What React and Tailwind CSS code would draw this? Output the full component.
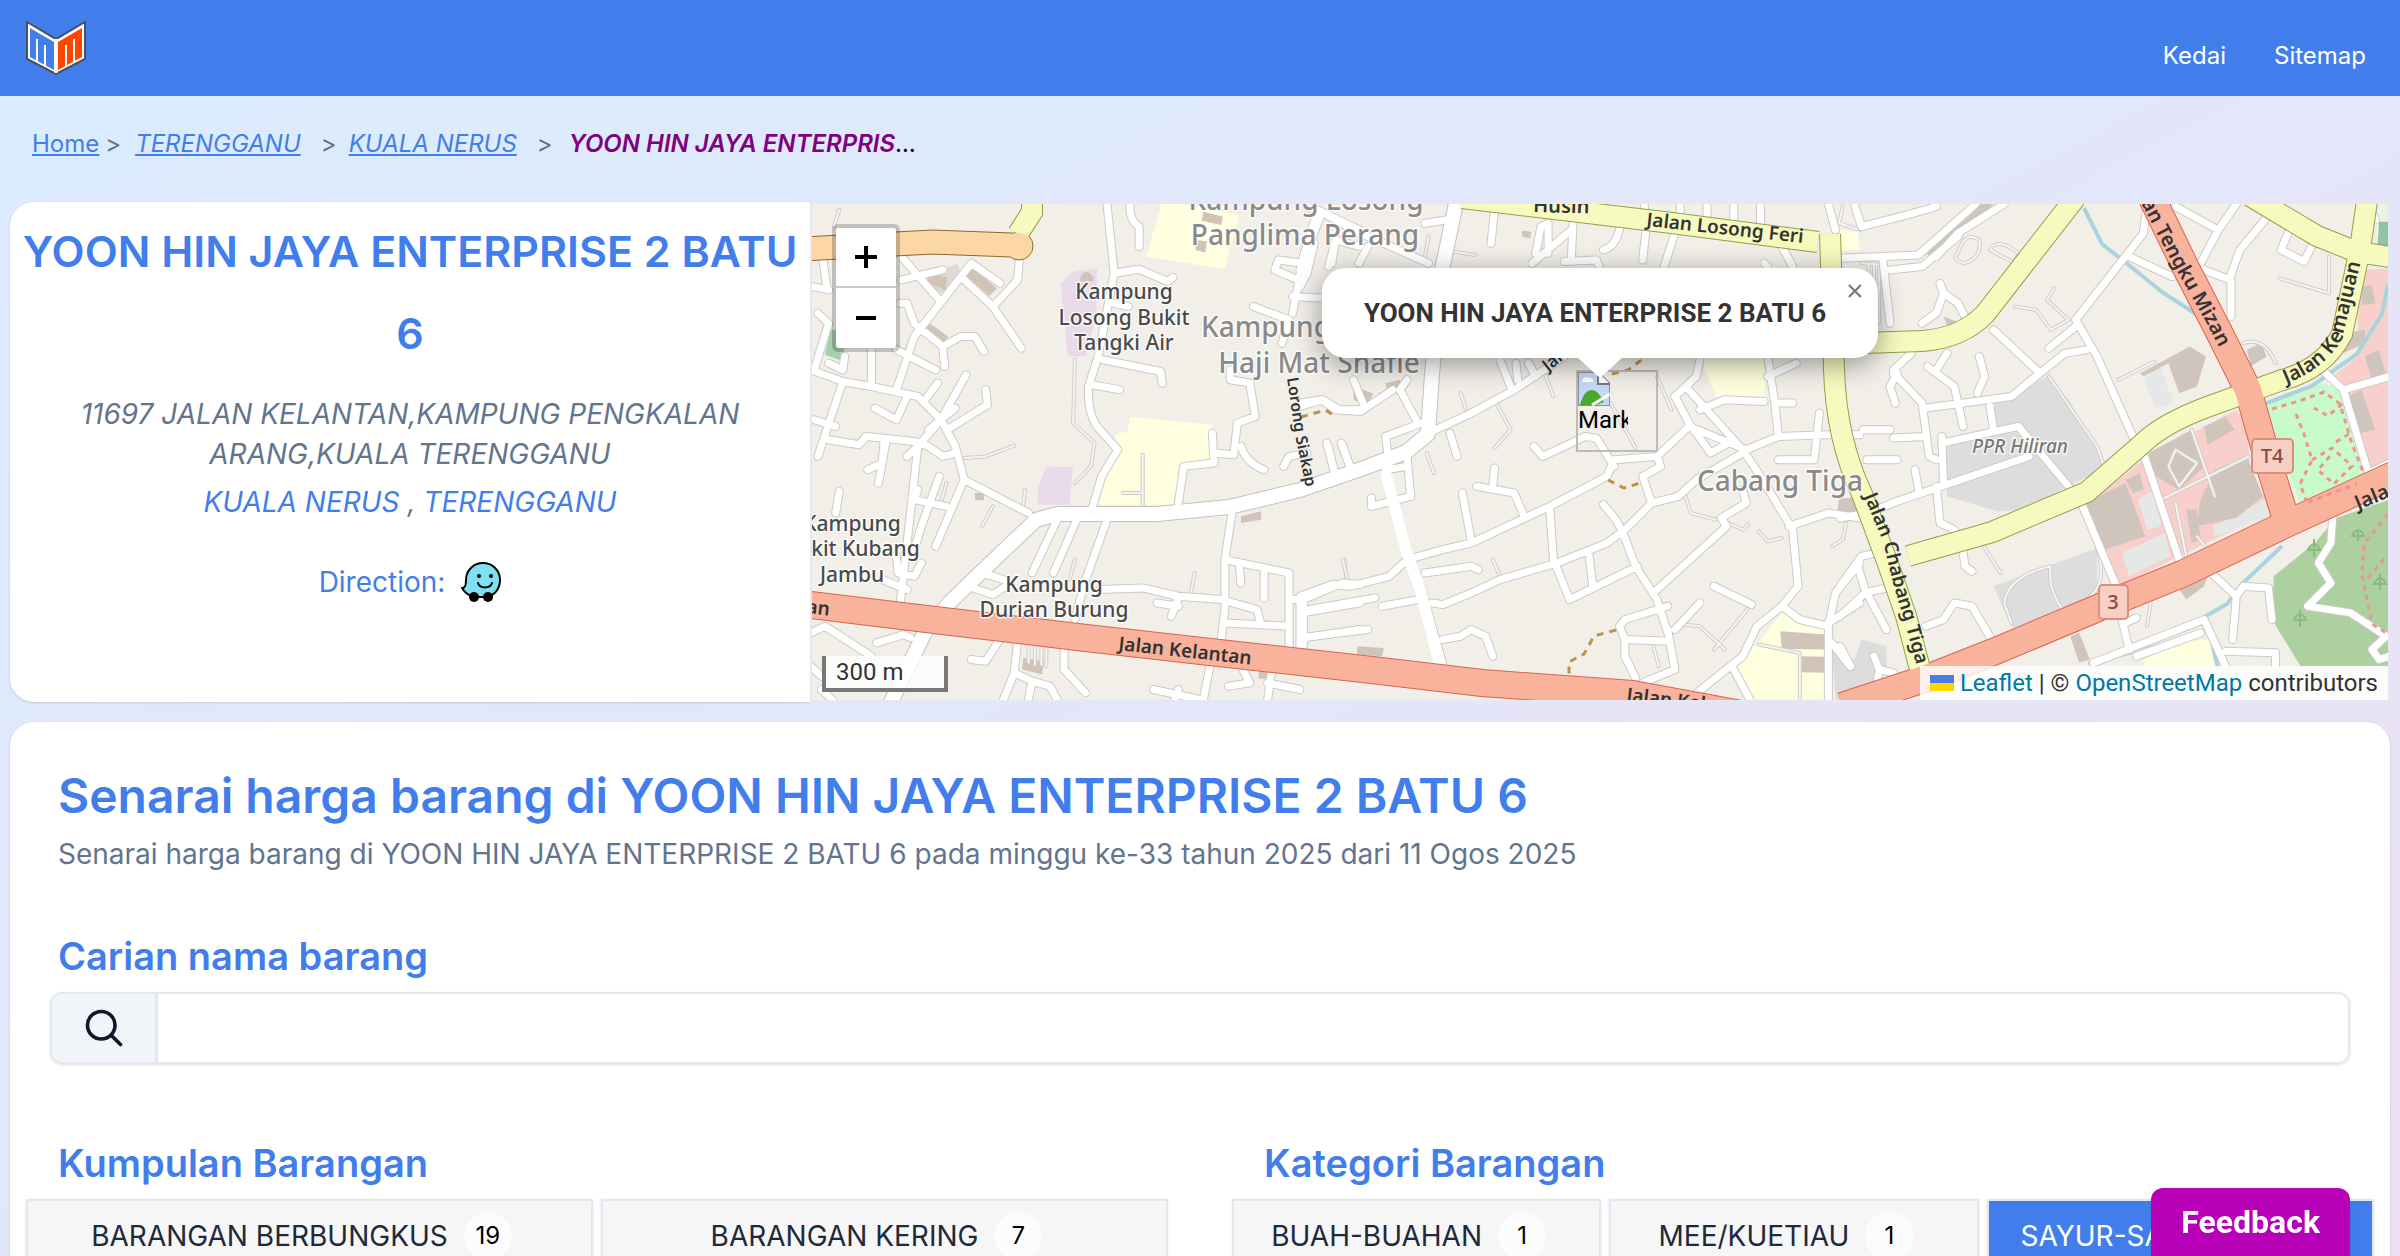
import React from 'react';

// Each tile holds its own drawing units, the transform places it on the map
const tiles = [
  {
    id: 'west',
    transform: 'translate(-12 -14) scale(0.357 0.333)',
    areas: [
      { fill: '#feffdf', d: 'M1015 30L1230 75L1190 238L970 200ZM925 682L1155 705L1150 820L1065 830L1055 945L835 945L850 860L900 790L880 735L918 725Z' },
      { fill: '#e9dae9', d: 'M730 280L765 245L832 235L830 380L800 500L750 500ZM665 945L668 890L690 830L765 832L755 945Z' },
      { fill: '#a5cfae', d: 'M85 420L140 420L115 512L70 495Z' },
      { fill: '#dcdad6', d: 'M355 255L440 222L448 240L400 310L360 300Z' },
      { fill: '#d0c3b8', d: 'M360 250L412 262L408 300L360 280ZM480 232L552 295L530 318L466 258ZM360 398L415 440L402 458L346 415ZM625 1405L683 1415L678 1455L622 1440ZM1130 65L1185 80L1180 105L1125 92ZM785 262Q800 230 822 262L820 275L785 275ZM1235 980L1292 965V990L1235 1000ZM490 910H515V932H490ZM1285 1440H1308V1468H1285ZM1110 150L1140 155L1135 188L1108 180Z' },
    ],
    trackways: 'M770 510L765 700L825 760L815 830L770 880M460 805L520 800L600 768M540 950L510 1010M630 900L625 950M110 60L95 110M1105 1150L1095 1210M770 1110L755 1170M960 795V950M905 910H960M640 1360V1420M658 1360V1425M676 1360V1425M690 1360V1430M1525 1110L1530 1165M410 880L395 940',
    roads: 'M860 42L880 250L835 500L808 590Q805 680 840 720L890 780L845 860L820 950M880 250L950 238L1030 275L1045 262M925 42Q920 90 950 110L950 170M850 510L1010 545L1015 580M820 585L895 600M880 340L920 350M284 200L390 330M284 270L400 240M270 600L320 440L480 220L560 280M460 270L540 350L620 475M540 350L610 270L615 200M330 410L400 470L450 440L490 440L515 485M400 470L405 530M270 480L380 540M200 480L200 590M30 540L120 575L200 590L330 620L395 690L435 770L460 870L640 970M40 540L80 400L50 370M35 290L80 300M65 215L75 290M125 500L120 540M80 520L120 540M395 690L465 555M350 630L385 580M435 655L360 720M420 715L525 645L520 600M210 655L270 690L300 620M395 690L330 770L280 1250M40 690L100 710M120 575L50 800M80 750L165 765L185 740L320 755L360 770L400 800L435 790M240 760L220 880M190 840L230 820L235 760M300 800L330 770M460 870L380 1070M390 860L340 1010L320 1080M320 930L410 950M330 900L320 930M110 905L100 970M270 1100L275 1150L320 1160L340 1120M230 1170L300 1200M280 340H300L320 400M720 990L650 1150M775 990L710 1150M860 990L800 1170L770 1290M510 1150L570 1170M470 1190L540 1215L590 1180M840 1200L960 1195L1060 1220L1180 1230L1280 1260L1290 1300M1060 1225L1040 1280M1000 1240L1060 1250M1210 970L1190 1110L1190 1260L1180 1350M1190 1110L1370 1150L1370 1370M1230 1120L1235 1180M1300 1140L1300 1225M1370 1230L1410 1230L1520 1180L1568 1185M1410 1230V1370M1410 1270L1568 1240M1410 1345L1568 1320M1190 1300L1370 1310M1060 940L1075 830L1160 820L1155 730M1160 790L1215 795L1225 700L1275 680L1260 580L1205 570V540M1235 770Q1250 820 1300 840M1355 830L1370 800L1420 790M1480 770L1495 840M1520 765L1540 830M1400 650L1465 630L1510 660H1568M1380 320L1468 325M1380 370L1410 200L1450 60L1568 120M1410 220L1340 210L1330 240L1385 265M1270 350L1370 390M1490 220L1500 150L1568 170M1370 390L1350 460M30 1330L70 1310L200 1400M215 1360L290 1335L310 1345M610 1350L600 1450L570 1530M480 1410L520 1415L560 1350M740 1370L740 1440L800 1510M600 1450L650 1475L640 1530M650 1475L700 1490L720 1530M1150 1420L1130 1530M1240 1440L1260 1480L1200 1490M1320 1450L1310 1530M1310 1480L1400 1500M990 1500L1120 1530M1060 1500L1050 1530M60 1500L90 1530M30 1430L60 1460',
  },
  {
    id: 'centre',
    transform: 'translate(488 -14) scale(0.357 0.333)',
    areas: [
      { fill: '#feffdf', d: 'M1120 500L1310 500L1300 620L1165 620ZM1350 1270L1480 1320L1470 1530H1260L1225 1430L1290 1350Z' },
      { fill: '#dddcda', d: 'M1490 1380L1568 1420V1530H1500Z' },
      { fill: '#d0c3b8', d: 'M1345 1325L1475 1335V1380L1350 1378ZM1405 1400L1468 1402V1450L1405 1448ZM1510 925L1568 925V975L1505 970ZM150 590L205 610L190 650L150 630ZM240 580L280 570L285 600L245 620ZM160 1370L235 1375L230 1400L160 1395ZM622 122L648 125L645 145L622 140Z' },
    ],
    trackways: 'M450 610L465 660M550 640L590 720L545 775M870 640L940 775M685 550L710 620M1000 560L1040 660M1080 920L1095 970L1165 990M1200 1000L1240 1020L1255 1005M1285 1025L1310 1055L1350 1045M1530 1000L1520 1050L1490 1070M120 1110L135 1180M540 1110L560 1160M1070 1305L1120 1310L1190 1380M1260 1250L1160 1380M1285 1365L1400 1390V1530M990 1370L1005 1430M355 790L375 850M430 185L490 195M360 140L350 200M1520 50L1510 100L1568 120',
    roads: 'M380 720L480 670L600 600L740 500M420 730L440 800M590 590L560 510M610 570L605 520M660 560L640 520M240 840L300 1100L340 1200L400 1425M300 800L310 920L200 950L200 925M240 840L300 830M300 1110L400 1080L480 1060L700 950L860 860L880 810L1000 800M655 770L680 800L800 740L830 745L880 830M1000 800L1090 710L1250 780L1340 740L1480 735H1568M1000 800L1010 830L960 860L985 940L910 1020L860 1060L720 1120L560 1170L480 1210L400 1245L370 1240M700 965L710 1110L755 1230L945 1130M810 1100L820 1190M850 945L885 990L905 1030L940 1130L1000 1230L1030 1330M1000 1200L1195 1010L1180 985L1250 940L1240 900M985 940L1060 920L1110 870L1240 790M1050 620L1090 700L1150 790L1200 760M1050 620L1110 560L1120 510M1080 590L1240 780L1290 860L1380 1020L1395 1190L1350 1250L1280 1310L1240 1400L1100 1520M1120 660L1190 630L1300 635M1310 500L1330 640H1380M1330 640L1340 740M1310 560L1390 520M1455 670L1440 810H1340M1370 1010L1480 970L1568 985M1350 1250L1400 1290L1480 1310L1500 1210L1568 1120M1480 1310V1530M1480 1300L1568 1240M1490 1360L1540 1430M1160 1190L1265 1245M1120 1240L1050 1320M1030 1250L910 1290L895 1310L910 1350L1030 1355M910 1350L910 1400L940 1465M1030 1320L1050 1440L960 1480M1210 1430L1260 1530M480 1055L455 910M495 890L600 910L630 985M540 890L545 835M300 1110L250 1160L140 1190L90 1185L0 1220V1380M350 1150L480 1130L500 1140M230 1250L330 1230M0 1265L210 1225M0 1345L190 1320M400 1350L450 1340L480 1320L520 1340L540 1400M330 700L280 600L300 570M0 640L60 630L100 660L170 665L260 600M150 570L180 650M340 700L240 740L250 830M75 760L95 840M115 760L140 830M400 320H440M50 60L150 120L360 220M350 100L410 90M545 60L535 160M40 160L20 250L0 290M100 150L80 230M190 170L165 220M765 90L760 210M660 190L675 110L695 100V190M760 120L650 220M740 215L830 210L840 235M900 90Q890 170 850 180M970 110L960 210M1050 130L1020 230M965 50V80M1065 50V85M1140 50V90M1215 50V100M1290 50V100M1340 150L1380 230M1480 42L1500 120M20 50L60 70L0 240M1310 230L1300 220',
  },
  {
    id: 'east',
    transform: 'translate(1028 -14) scale(0.357 0.333)',
    areas: [
      { fill: '#dddddd', d: 'M435 640L580 560L640 630L750 830L510 960L440 965L300 920L300 770L430 730ZM430 1190L720 1075V1240L530 1325L480 1310ZM60 1350L130 1370V1430L60 1520L30 1440Z' },
      { fill: '#c8facc', d: 'M1190 640L1350 580L1410 600L1480 850L1290 940L1250 830Z' },
      { fill: '#add19e', d: 'M1390 985L1540 930V1430H1290L1210 1290L1215 1160L1330 1060Z' },
      { fill: '#f9cfcb', d: 'M690 950L860 800L1110 660L1140 700L1150 870L1220 960L930 1110L780 1190ZM1450 240L1540 235V840L1490 850L1420 600L1380 560L1450 500Z' },
      { fill: '#e6e7e7', d: 'M790 1090L910 1030L925 1100L810 1160ZM835 930L880 900L900 1010L860 1020ZM1045 1010L1190 930L1210 980L1050 1040ZM850 570L895 520L935 640L885 655Z' },
      { fill: '#feffdf', d: 'M850 1410L960 1355L1040 1350L1060 1430H850ZM0 120L50 125L55 180L0 185Z' },
      { fill: '#d0c5bc', d: 'M690 940L800 880L855 1040L740 1080ZM865 790L985 720L1020 830L950 900L870 850ZM1050 840L1140 800L1185 920L1110 985L1000 1010L1010 930ZM1020 710L1080 680L1105 720L1030 765ZM840 550L980 470L1025 500L1000 590L950 610L920 520L850 560ZM290 380L340 400L330 410L300 405ZM1140 480L1180 460L1195 500L1150 530ZM950 1200L1030 1160L1020 1190L970 1230ZM645 1340L670 1330L700 1410L670 1420ZM1425 620L1460 600L1500 720L1460 730ZM1410 430L1470 420V460L1410 490ZM0 925L60 925L50 975L0 960ZM240 190L380 42H430L270 210ZM1470 500L1510 480L1530 560L1490 570ZM1465 290L1490 285L1500 340L1460 345ZM800 870L840 850L850 900L820 910ZM970 960H1000L1010 1050L985 1060Z' },
      { fill: '#8fc3a4', d: 'M1510 95H1540V180H1505Z' },
    ],
    trackways: 'M585 560L720 770L740 830M330 190Q350 120 390 150Q400 200 350 220Q310 210 330 190M420 180Q440 140 500 190L490 220ZM600 295L580 330L640 390L590 420L550 360L490 350M780 570L880 515M1130 460Q1190 440 1220 520M1230 265L1370 310V200M400 1065L450 1150M720 1075Q750 1180 700 1220M590 1130Q580 1200 630 1270M460 1240Q470 1160 590 1130M460 1240L480 1300M920 830L940 780L1000 820L950 890ZM900 930L1145 800M985 720L1050 920M940 940L970 1100M1000 1040L1030 1080M700 1420L1000 1340M860 1310L870 1240M110 230V400M80 220V300M95 220V330M60 220L120 225',
    roads: 'M270 200L330 130L460 42M0 205L220 195L380 42M140 240L230 230L330 140M120 210L140 400M40 42L60 110L170 80L270 50M280 280L290 310L270 370L230 400M290 310L330 340L360 400M430 420L560 550M585 475L660 410M690 480L630 490L560 550L480 620L240 655M860 42L850 130L660 390L720 500L820 740M850 790L950 1110M810 200L930 260L960 250M1020 240L1095 270V380M1090 270L1120 180L1190 90M940 50L1060 120L1010 220M1060 120L1110 42M1255 130L1235 180L1300 215L1330 150M150 540L200 490M160 550L140 590L155 640M150 550L230 640L250 800L270 810M245 530L320 590L345 710M270 540L300 490M390 500L405 560L385 610M420 650L430 720M285 760L500 710L640 890M290 880L285 740M150 745L240 740M65 720H140M75 810H160M210 840L220 900M0 985L80 970L160 935L530 800M270 890L280 1000L320 1020M345 1090L350 1130L370 1145M680 950L770 1180M0 1190L60 1100L140 1080M50 1130L70 1200L130 1320M0 1280L70 1210L150 1190M240 1310L290 1290L320 1240L370 1250L430 1360M0 1370L30 1430M95 1400L110 1440L100 1500M110 1440L150 1450M710 1420L1020 1290L1080 1430M790 1290L810 1380M800 1300L830 1285M830 1400L1010 1330M1040 1150L1110 1220L1130 1190L1200 1195L1210 1290M1110 1220L1100 1350M1080 1385L1220 1390V1430M1380 985L1375 1060L1340 1120L1375 1180L1310 1250L1430 1270L1530 1340L1490 1380L1510 1410L1540 1400M1350 540L1410 600L1540 560M1410 600L1480 850L1540 820M1480 42L1500 90',
  },
];

// casing, fill, width
const palette = {
  yellow: ['#93a04a', '#f7fabf', 20],
  orange: ['#8a6a2c', '#fcd6a4', 23],
  red: ['#d9644c', '#f9b29c', 26],
};

const highways = [
  { kind: 'yellow', d: 'M206 30L220 8L220 -10' },
  { kind: 'orange', d: 'M-10 45L120 38L200 41' },
  { kind: 'yellow', d: 'M650 -6L860 19L1006 38' },
  { kind: 'yellow', d: 'M1018 30L1020 90L1022 165Q1024 235 1050 290L1076 360L1094 412L1112 480' },
  { kind: 'yellow', d: 'M1022 140L1110 137Q1150 134 1173 110L1268 -12' },
  { kind: 'yellow', d: 'M1096 352L1180 328L1275 288L1330 240Q1350 220 1395 203L1470 176Q1512 165 1530 130L1548 45L1556 -10' },
  { kind: 'yellow', d: 'M1438 -8L1505 32L1545 48L1585 54' },
  { kind: 'red', d: 'M-10 400L131 417L274 434L398 448L560 466L670 479L820 490L940 512' },
  { kind: 'red', d: 'M1030 502L1115 474L1186 446L1286 404L1370 370L1470 322L1590 267' },
  { kind: 'red', d: 'M1338 -10L1375 66L1408 130L1436 186L1457 260L1476 322' },
];

const trunkRoad = 'M78 500L112 430L138 398L188 350L224 316L245 310L345 310L417 303L488 286L552 264L594 248L616 230L620 170L630 66L646 -10';

const labels = [
  { x: 494, y: 6, size: 28, soft: true, text: 'Kampung Losong' },
  { x: 493, y: 41, size: 28, soft: true, text: 'Panglima Perang' },
  { x: 454, y: 133, size: 28, soft: true, text: 'Kampung' },
  { x: 507, y: 169, size: 28, soft: true, text: 'Haji Mat Shafie' },
  { x: 968, y: 287, size: 28, soft: true, text: 'Cabang Tiga' },
  { x: 312, y: 95, size: 21, text: 'Kampung' },
  { x: 312, y: 121, size: 21, text: 'Losong Bukit' },
  { x: 312, y: 146, size: 21, text: 'Tangki Air' },
  { x: 40, y: 327, size: 21, text: 'Kampung' },
  { x: 40, y: 352, size: 21, text: 'Bukit Kubang' },
  { x: 40, y: 378, size: 21, text: 'Jambu' },
  { x: 242, y: 388, size: 21, text: 'Kampung' },
  { x: 242, y: 413, size: 21, text: 'Durian Burung' },
];

const streetNames = [
  { id: 'losong-feri', d: 'M834 22L1010 41', size: 19, text: 'Jalan Losong Feri' },
  { id: 'husin', d: 'M721 8L800 10', size: 20, text: 'Husin' },
  { id: 'kelantan', d: 'M306 446L480 465', size: 19, text: 'Jalan Kelantan' },
  { id: 'kelantan-east', d: 'M814 497L930 511', size: 19, text: 'Jalan Kelantan' },
  { id: 'kelantan-west', d: 'M-6 409L40 414', size: 19, text: 'an' },
  { id: 'siakap', d: 'M475 174L483 230L497 300', size: 16, text: 'Lorong Siakap' },
  { id: 'chabang', d: 'M1052 292L1072 340Q1080 380 1092 415L1112 490', size: 19, text: 'Jalan Chabang Tiga' },
  { id: 'mizan', d: 'M1318 -22L1360 58L1395 120L1424 176', size: 20, text: 'Jalan Tengku Mizan' },
  { id: 'kemajuan', d: 'M1474 180Q1514 164 1530 135L1552 45', size: 20, text: 'Jalan Kemajuan' },
  { id: 'jalan-east', d: 'M1546 306L1600 284', size: 20, text: 'Jalan' },
  { id: 'jalan-mid', d: 'M736 168L790 124', size: 17, text: 'Jalan' },
];

const groups = [
  { name: 'BARANGAN BERBUNGKUS', count: 19 },
  { name: 'BARANGAN KERING', count: 7 },
];

const categories = [
  { name: 'BUAH-BUAHAN', count: 1 },
  { name: 'MEE/KUETIAU', count: 1 },
  { name: 'SAYUR-SAYURAN', count: 3, active: true },
];

const Lines = ({ d, color, width }) => (
  <path
    d={d}
    fill="none"
    stroke={color}
    strokeWidth={width}
    strokeLinecap="round"
    strokeLinejoin="round"
    vectorEffect="non-scaling-stroke"
  />
);

const StreetMap = () => (
  <svg
    viewBox="0 0 1576 496"
    preserveAspectRatio="xMidYMid slice"
    className="absolute inset-0 h-full w-full"
    fontFamily="'Noto Sans', sans-serif"
    aria-hidden="true"
  >
    <rect width="1576" height="496" fill="#f2efe9" />
    {tiles.map((tile) => (
      <g key={tile.id} transform={tile.transform}>
        {tile.areas.map((area) => (
          <path key={area.d} d={area.d} fill={area.fill} />
        ))}
        <Lines d={tile.trackways} color="#cfcdcb" width={4} />
        <Lines d={tile.trackways} color="#f6f4f0" width={2} />
      </g>
    ))}
    <g fill="none" stroke="#aad3df" strokeWidth="4">
      <path d="M1272 4L1290 40L1318 62L1350 88L1390 114" />
      <path d="M1452 200L1500 182L1545 150L1570 110L1576 80" />
      <path d="M1464 300Q1462 322 1440 336" />
      <path d="M1470 342L1430 380L1415 400L1394 412L1406 465" />
    </g>
    {tiles.map((tile) => (
      <g key={tile.id} transform={tile.transform}>
        <Lines d={tile.roads} color="#cccac7" width={9} />
      </g>
    ))}
    <Lines d={trunkRoad} color="#c4c2be" width={16} />
    {tiles.map((tile) => (
      <g key={tile.id} transform={tile.transform}>
        <Lines d={tile.roads} color="#ffffff" width={7} />
      </g>
    ))}
    <Lines d={trunkRoad} color="#ffffff" width={14} />
    <Lines d="M574 270L595 350L608 385L628 462" color="#ffffff" width={11} />
    {highways.map((way) => (
      <path key={way.d} d={way.d} fill="none" stroke={palette[way.kind][0]} strokeWidth={palette[way.kind][2] + 2} />
    ))}
    <circle cx="207" cy="42" r="14" fill="#fcd6a4" stroke="#8a6a2c" />
    {highways.map((way) => (
      <path key={way.d} d={way.d} fill="none" stroke={palette[way.kind][1]} strokeWidth={palette[way.kind][2]} />
    ))}
    <circle cx="207" cy="42" r="13" fill="#fcd6a4" />
    <g fill="none" stroke="#c0914a" strokeWidth="3" strokeDasharray="7 6">
      <path d="M489 213L514 206L522 212" />
      <path d="M800 170L816 166L832 154" />
      <path d="M796 276L812 284L828 279" />
      <path d="M804 426L782 432L772 450L757 458V472" />
    </g>
    <g fill="none" stroke="#f0938c" strokeWidth="3" strokeDasharray="5 5">
      <path d="M1460 205L1490 196L1512 188L1528 200L1540 240L1552 270" />
      <path d="M1484 210L1492 230L1500 256L1488 280L1494 296" />
      <path d="M1500 256L1520 244L1540 262L1522 280L1506 266L1518 252" />
      <path d="M1530 200L1516 212L1502 204M1524 238L1540 228M1496 298L1545 280" />
      <path d="M1576 310L1552 340L1550 370L1560 420L1576 430M1556 374L1576 350" />
    </g>
    <g fill="none" stroke="#8cb97f" strokeWidth="2">
      <path d="M1502 335v18M1496 346q6-12 12 0ZM1488 405v18M1482 416q6-12 12 0ZM1546 325v12M1540 332q6-12 12 0ZM1568 370v16M1562 380q6-12 12 0Z" />
    </g>
    <g fontWeight="500" stroke="#fff" strokeOpacity="0.75" strokeWidth="3" paintOrder="stroke" strokeLinejoin="round" textAnchor="middle">
      {labels.map((label) => (
        <text
          key={`${label.x}-${label.y}`}
          x={label.x}
          y={label.y}
          fontSize={label.size}
          fill={label.soft ? '#8a8a8a' : '#4a4a4a'}
        >
          {label.text}
        </text>
      ))}
      <text x="1208" y="249" fontSize="19" fontStyle="italic" fill="#777">PPR Hiliran</text>
    </g>
    <g fill="#333" fontWeight="600">
      {streetNames.map((street) => (
        <g key={street.id}>
          <path id={street.id} d={street.d} fill="none" />
          <text fontSize={street.size}>
            <textPath href={`#${street.id}`}>{street.text}</textPath>
          </text>
        </g>
      ))}
    </g>
    <g fontSize="20" fontWeight="500" fill="#8a4a40" textAnchor="middle">
      <rect x="1440" y="235" width="41" height="34" rx="4" fill="#f7cfc4" stroke="#dc8f7e" strokeWidth="2" />
      <text x="1460" y="259">T4</text>
      <rect x="1287" y="381" width="29" height="34" rx="4" fill="#f7cfc4" stroke="#dc8f7e" strokeWidth="2" />
      <text x="1301" y="405">3</text>
    </g>
  </svg>
);

const Logo = () => (
  <svg viewBox="0 0 60 54" className="h-[54px] w-[60px]" aria-hidden="true">
    <path d="M1 1L30 18L59 1V38L30 53L1 38Z" fill="#fff" stroke="#46505f" strokeWidth="2" />
    <path d="M4 7L28 21V49L4 36Z" fill="#427eeb" />
    <path d="M32 21L56 7V36L32 49Z" fill="#ff4500" />
    <path d="M11 18V41M19 24V46M40 24V46M48 18V41" fill="none" stroke="#fff" strokeWidth="2" />
    <path d="M30 18V52" stroke="#fff" strokeWidth="3" />
  </svg>
);

const WazeIcon = () => (
  <svg viewBox="0 0 40 40" className="h-10 w-10" aria-hidden="true">
    <path
      d="M22 1C31 1 39 8 39 18C39 28 32 35 23 35H14C8 34 4 31 1 26C4 26 5 24 5 18C5 8 13 1 22 1Z"
      fill="#7fdff3"
      stroke="#000"
      strokeWidth="2"
    />
    <circle cx="13" cy="35" r="5" />
    <circle cx="27" cy="35" r="5" />
    <circle cx="18" cy="14" r="2" />
    <circle cx="30" cy="14" r="2" />
    <path d="M17 21C19 27 29 27 31 21" fill="none" stroke="#000" strokeWidth="2" strokeLinecap="round" />
  </svg>
);

const FilterButton = ({ name, count, active }) => (
  <button
    type="button"
    className={
      active
        ? 'flex h-[74px] items-center justify-center gap-4 border-2 border-slate-200 bg-[#427eeb] px-8 text-[28px] whitespace-nowrap text-white shadow'
        : 'flex h-[74px] items-center justify-center gap-4 border-2 border-slate-200 bg-[#f6f6f7] px-8 text-[28px] whitespace-nowrap text-gray-800 shadow'
    }
  >
    {name}
    <span className="mr-4 flex size-12 items-center justify-center rounded-full bg-[#fcfcfc] text-2xl text-black">
      {count}
    </span>
  </button>
);

const Map = () => (
  <div className="relative min-w-0 flex-1 overflow-hidden border-2 border-[#e3e8f3] font-[Roboto,sans-serif]">
    <StreetMap />

    <div className="absolute top-5 left-5 flex flex-col rounded-md border-4 border-black/20 bg-clip-padding">
      <button type="button" aria-label="Zoom in" className="flex size-[60px] items-center justify-center rounded-t-sm border-b-2 border-[#ccc] bg-white">
        <svg viewBox="0 0 24 24" className="size-6" aria-hidden="true"><path d="M1 12H23M12 1V23" stroke="#000" strokeWidth="4" /></svg>
      </button>
      <button type="button" aria-label="Zoom out" className="flex size-[60px] items-center justify-center rounded-b-sm bg-white">
        <svg viewBox="0 0 24 24" className="size-6" aria-hidden="true"><path d="M2 12H22" stroke="#000" strokeWidth="4" /></svg>
      </button>
    </div>

    <div className="absolute top-[166px] left-1/2 size-[82px] -translate-x-6 border-2 border-[#bdbbb8] text-black">
      <svg viewBox="0 0 32 34" className="h-[34px] w-8" aria-hidden="true">
        <path d="M0 0H20L32 12V34H0Z" fill="#c3d9f5" stroke="#8b9099" strokeWidth="2" />
        <path d="M4 8Q7 3 11 6Q16 6 15 10H4Z" fill="#fff" />
        <path d="M2 33Q6 18 14 18Q20 18 26 30L18 33Z" fill="#4ca72c" />
        <path d="M20 0V12H32" fill="#fff" stroke="#777" strokeWidth="2" />
        <path d="M14 33L32 22" stroke="#fff" strokeWidth="3" />
      </svg>
      <span className="block w-[50px] overflow-hidden text-2xl leading-7">Marker</span>
    </div>

    <div className="absolute top-16 left-1/2 -translate-x-1/2">
      <div className="relative z-10 flex h-[90px] items-center rounded-3xl bg-white pr-[52px] pl-[42px] text-[26px] font-bold whitespace-nowrap text-[#333] shadow-[0_6px_28px_rgba(0,0,0,0.4)]">
        YOON HIN JAYA ENTERPRISE 2 BATU 6
        <button type="button" aria-label="Close popup" className="absolute top-3 right-3 p-1">
          <svg viewBox="0 0 14 14" className="size-[14px]" aria-hidden="true"><path d="M1 1L13 13M13 1L1 13" stroke="#757575" strokeWidth="2" /></svg>
        </button>
      </div>
      <svg viewBox="0 0 44 20" className="relative z-10 mx-auto h-5 w-11" aria-hidden="true">
        <path d="M0 0H44L22 20Z" fill="#fff" />
      </svg>
    </div>

    <div className="absolute bottom-2 left-[10px] h-9 w-[126px] border-4 border-t-0 border-[#777] bg-white/80 px-[10px] text-2xl leading-8 text-[#333]">
      300 m
    </div>

    <div className="absolute right-0 bottom-0 flex h-[34px] items-center gap-[6px] bg-white/80 px-[10px] text-2xl text-[#333]">
      <svg viewBox="0 0 24 16" className="h-4 w-6" aria-hidden="true">
        <path d="M0 0H24V8H0Z" fill="#4c7be1" />
        <path d="M0 8H24V16H0Z" fill="#ffd500" />
      </svg>
      <span>
        <a href="#leaflet" className="text-[#0078a8]">Leaflet</a> | © <a href="#osm" className="text-[#0078a8]">OpenStreetMap</a> contributors
      </span>
    </div>
  </div>
);

const App = () => {
  return (
    <div className="h-screen overflow-hidden bg-gradient-to-br from-[#d9edfe] via-[#e3e6f9] to-[#eddff3] font-[Inter,sans-serif]">
      <header className="flex h-24 items-center justify-between bg-[#427eeb] px-[26px]">
        <a href="#home" aria-label="Home"><Logo /></a>
        <nav className="flex gap-12 px-2 pt-4 text-2xl text-white">
          <a href="#kedai">Kedai</a>
          <a href="#sitemap">Sitemap</a>
        </nav>
      </header>

      <nav className="flex h-[106px] items-center px-8 pb-[10px] text-2xl text-[#427eeb]" aria-label="Breadcrumb">
        <a href="#home" className="underline">Home</a>
        <span className="mx-[6px] text-gray-500">&gt;</span>
        <a href="#terengganu" className="ml-2 italic underline">TERENGGANU</a>
        <span className="mr-3 ml-5 text-gray-500">&gt;</span>
        <a href="#kuala-nerus" className="italic underline">KUALA NERUS</a>
        <span className="mr-4 ml-5 text-gray-500">&gt;</span>
        <span className="w-[348px] truncate text-black">
          <span className="font-semibold text-[#800080] italic">YOON HIN JAYA ENTERPRISE 2 BATU 6</span>
        </span>
      </nav>

      <main className="px-[10px]">
        <section className="flex h-[500px]">
          <div className="flex w-[800px] shrink-0 flex-col items-center rounded-l-3xl bg-white pt-2 text-center text-[28px] shadow-sm">
            <h2 className="text-[43px] leading-[82px] font-semibold text-[#427eeb]">
              YOON HIN JAYA ENTERPRISE 2 BATU 6
            </h2>
            <address className="mt-5 px-12 leading-10 text-slate-500">
              11697 JALAN KELANTAN,KAMPUNG PENGKALAN ARANG,KUALA TERENGGANU
              <div className="mt-2">
                <a href="#kuala-nerus" className="text-[#427eeb]">KUALA NERUS</a> , <a href="#terengganu" className="text-[#427eeb]">TERENGGANU</a>
              </div>
            </address>
            <a href="#direction" className="mt-10 flex items-center gap-4 leading-10 text-[#427eeb]">
              Direction: <WazeIcon />
            </a>
          </div>
          <Map />
        </section>

        <section className="mt-5 rounded-t-3xl bg-white px-4 pt-9 pb-8 shadow-sm">
          <h1 className="px-8 text-[48px] leading-[76px] font-semibold text-[#427eeb]">
            Senarai harga barang di YOON HIN JAYA ENTERPRISE 2 BATU 6
          </h1>
          <p className="px-8 text-[28px] leading-10 text-slate-500">
            Senarai harga barang di YOON HIN JAYA ENTERPRISE 2 BATU 6 pada minggu ke-33 tahun 2025 dari 11 Ogos 2025
          </p>

          <div className="px-6 pt-[54px]">
            <label htmlFor="search" className="block px-2 text-[38px] leading-[56px] font-semibold text-[#427eeb]">
              Carian nama barang
            </label>
            <div className="mt-2 flex h-[72px] overflow-hidden rounded-xl border-2 border-slate-200 shadow-sm">
              <span className="flex w-[106px] items-center justify-center border-r-3 border-slate-200 bg-slate-100 text-gray-900">
                <svg viewBox="0 0 24 24" className="size-11" fill="none" stroke="currentColor" strokeWidth="2" strokeLinecap="round" aria-hidden="true">
                  <path d="m21 21-5.197-5.197m0 0A7.5 7.5 0 1 0 5.196 5.196a7.5 7.5 0 0 0 10.607 10.607Z" />
                </svg>
              </span>
              <input id="search" type="text" className="min-w-0 flex-1 bg-white px-4 text-[28px] outline-none" />
            </div>
          </div>

          <div className="grid grid-cols-2 gap-16 pt-[71px]">
            <div>
              <h3 className="px-8 text-[38px] leading-[56px] font-semibold text-[#427eeb]">Kumpulan Barangan</h3>
              <div className="mt-2 grid grid-cols-2 gap-2">
                {groups.map((item) => (
                  <FilterButton key={item.name} {...item} />
                ))}
              </div>
            </div>
            <div>
              <h3 className="px-8 text-[38px] leading-[56px] font-semibold text-[#427eeb]">Kategori Barangan</h3>
              <div className="mt-2 grid grid-cols-[1fr_1fr_auto] gap-2">
                {categories.map((item) => (
                  <FilterButton key={item.name} {...item} />
                ))}
              </div>
            </div>
          </div>
        </section>
      </main>

      <button
        type="button"
        className="fixed right-[50px] bottom-0 h-[68px] rounded-t-xl bg-[#b800b8] px-[30px] font-[Roboto,sans-serif] text-[32px] font-bold text-white shadow-md"
      >
        Feedback
      </button>
    </div>
  );
};

export default App;
